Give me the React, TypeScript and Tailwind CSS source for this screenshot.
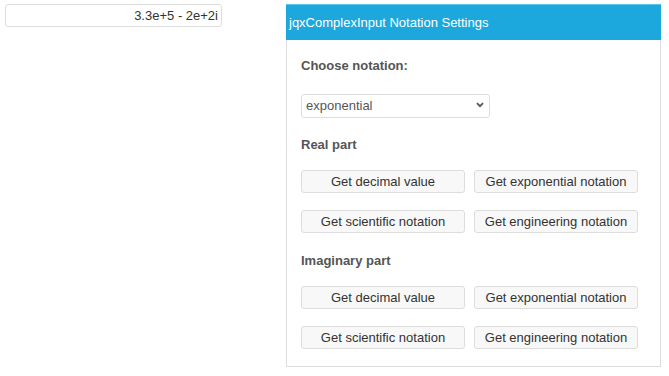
import React from 'react';

const font = { fontFamily: '"Liberation Sans", Arial, sans-serif' };

function NotationButton({ label }: { label: string }) {
  return (
    <button className="h-[23px] w-[164px] rounded-[3px] border border-[#dddddd] bg-[#f8f8f8] text-[13px] leading-none text-[#333333]">
      {label}
    </button>
  );
}

function ButtonGroup() {
  return (
    <div className="flex flex-col gap-[17px]">
      <div className="flex gap-[9px]">
        <NotationButton label="Get decimal value" />
        <NotationButton label="Get exponential notation" />
      </div>
      <div className="flex gap-[9px]">
        <NotationButton label="Get scientific notation" />
        <NotationButton label="Get engineering notation" />
      </div>
    </div>
  );
}

export default function App() {
  return (
    <div className="flex min-h-screen items-start bg-white pl-[5px] pt-[4px]" style={font}>
      <input
        readOnly
        value="3.3e+5 - 2e+2i"
        className="h-[23px] w-[217px] rounded-[3px] border border-[#dddddd] bg-white px-[3px] text-right text-[13px] text-[#333333] outline-none"
      />

      <div className="ml-[64px] flex w-[375px] flex-col border border-[#dddddd]">
        <div className="flex h-[36px] items-center border-t border-[#5cc3ea] bg-[#1ca8dd] pl-[3px] text-[13px] text-white -mx-px -mt-px">
          jqxComplexInput Notation Settings
        </div>
        <div className="flex flex-col px-[14px] pb-[17px] pt-[18px]">
          <div className="text-[13px] font-bold leading-4 text-[#555555]">Choose notation:</div>
          <div className="relative mt-[19px] h-[24px] w-[189px]">
            <select
              defaultValue="exponential"
              className="h-full w-full appearance-none rounded-[3px] border border-[#dddddd] bg-white pl-[4px] text-[13px] text-[#555555] outline-none"
            >
              <option value="decimal">decimal</option>
              <option value="exponential">exponential</option>
              <option value="scientific">scientific</option>
              <option value="engineering">engineering</option>
            </select>
            <svg
              className="pointer-events-none absolute right-[6px] top-[9px]"
              width="8"
              height="6"
              viewBox="0 0 8 6"
            >
              <path d="M1 1.2 L4 4.2 L7 1.2" fill="none" stroke="#555555" strokeWidth="1.8" />
            </svg>
          </div>

          <div className="mt-[20px] text-[13px] font-bold leading-4 text-[#555555]">Real part</div>
          <div className="mt-[17px]">
            <ButtonGroup />
          </div>

          <div className="mt-[20px] text-[13px] font-bold leading-4 text-[#555555]">Imaginary part</div>
          <div className="mt-[17px]">
            <ButtonGroup />
          </div>
        </div>
      </div>
    </div>
  );
}
